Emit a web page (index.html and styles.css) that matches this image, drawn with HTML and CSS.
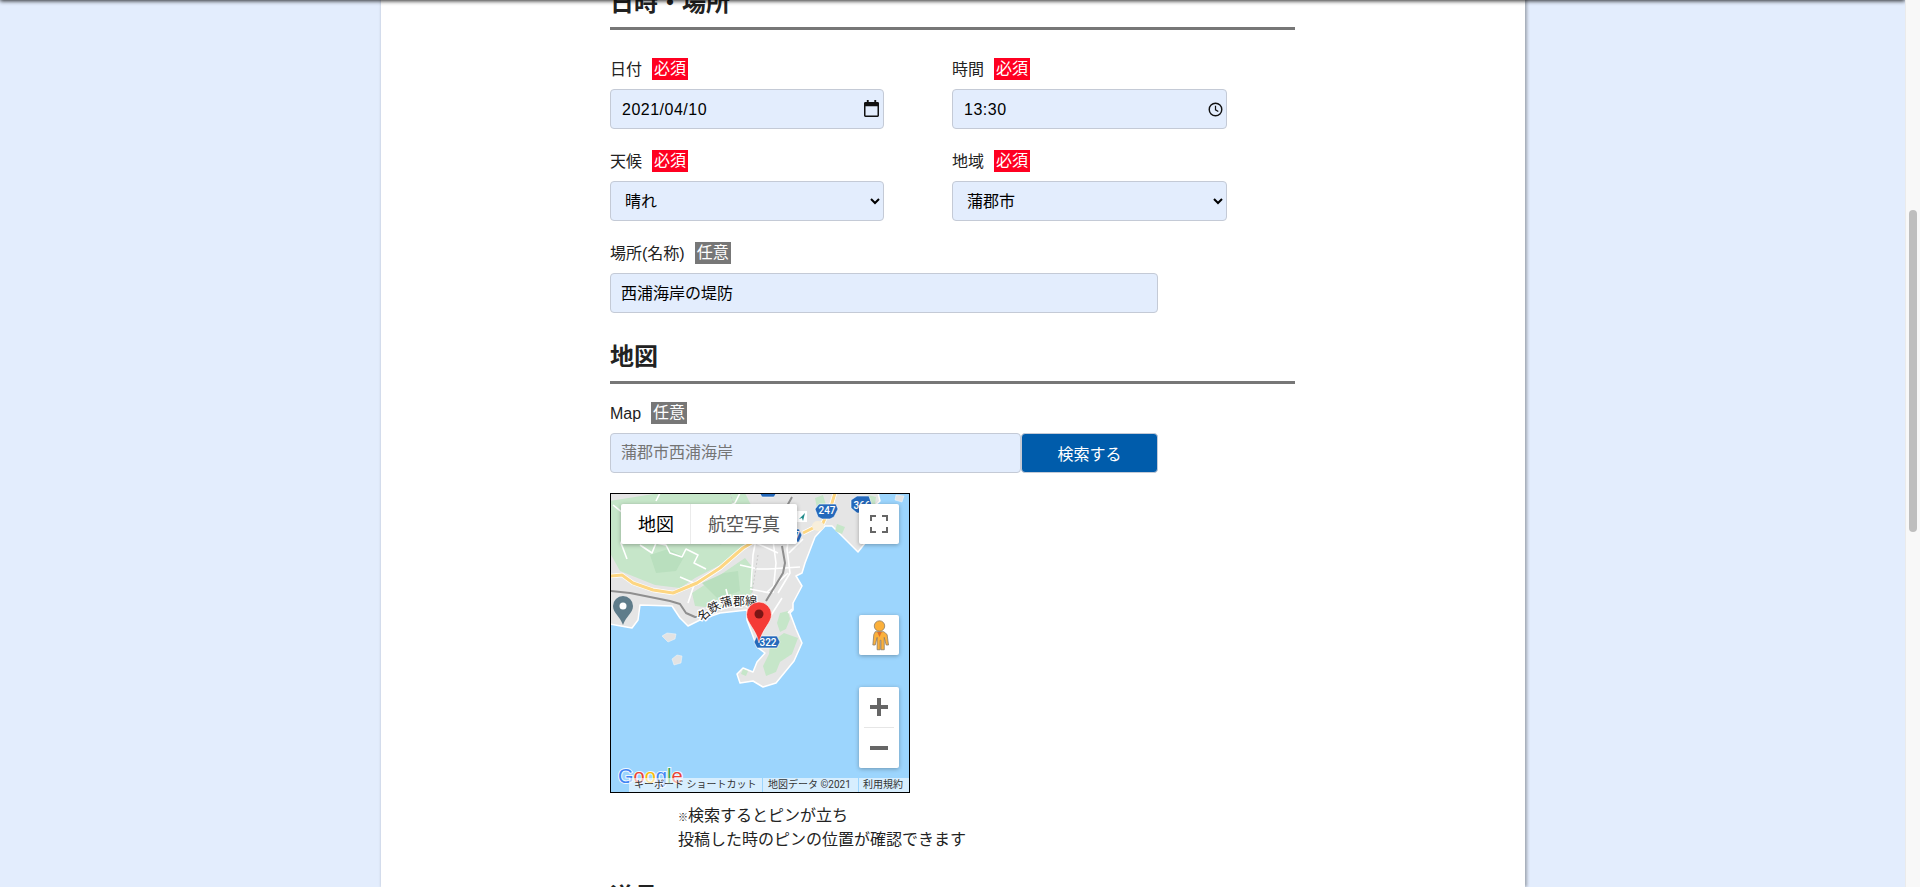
FILE: index.html
```html
<!DOCTYPE html>
<html lang="ja">
<head>
<meta charset="utf-8">
<title>投稿フォーム</title>
<link rel="stylesheet" href="styles.css">
</head>
<body>
<div class="viewport">
  <main class="stage">
    <div class="header-edge"></div>
    <form class="sheet">
      <h2 class="heading heading-first">日時・場所</h2>
      <div class="grid">
        <div class="field">
          <div class="label"><span class="label-text">日付</span><span class="badge req">必須</span></div>
          <div class="control">
            <input class="input" type="text" value="2021/04/10" readonly>
            <svg class="picker picker-date" viewBox="0 0 16 18"><path d="M3 0h2v2h6V0h2v2h1.500A1.500 1.500 0 0 1 16 3.500v13a1.500 1.500 0 0 1-1.500 1.500h-13A1.500 1.500 0 0 1 0 16.500v-13A1.500 1.500 0 0 1 1.500 2H3zM1.600 6.500v9.900h12.800V6.500z"/></svg>
          </div>
        </div>
        <div class="field">
          <div class="label"><span class="label-text">時間</span><span class="badge req">必須</span></div>
          <div class="control">
            <input class="input" type="text" value="13:30" readonly>
            <svg class="picker picker-time" viewBox="0 0 16 16"><circle cx="8" cy="8" r="6.700" fill="none" stroke="#111" stroke-width="1.500"/><path d="M8 4v4.400l3 1.800" fill="none" stroke="#111" stroke-width="1.300"/></svg>
          </div>
        </div>
        <div class="field">
          <div class="label"><span class="label-text">天候</span><span class="badge req">必須</span></div>
          <select class="input select"><option>晴れ</option><option>曇り</option><option>雨</option></select>
        </div>
        <div class="field">
          <div class="label"><span class="label-text">地域</span><span class="badge req">必須</span></div>
          <select class="input select"><option>蒲郡市</option><option>豊橋市</option></select>
        </div>
      </div>
      <div class="field field-wide">
        <div class="label"><span class="label-text">場所(名称)</span><span class="badge opt">任意</span></div>
        <input class="input wide" type="text" value="西浦海岸の堤防" readonly>
      </div>

      <h2 class="heading">地図</h2>
      <div class="field field-map">
        <div class="label"><span class="label-text">Map</span><span class="badge opt">任意</span></div>
        <div class="search">
          <input class="input search-input" type="text" placeholder="蒲郡市西浦海岸">
          <button class="search-btn" type="button">検索する</button>
        </div>
      </div>

      <div class="map">
        <svg class="map-art" viewBox="1 1 298 298">
          <rect class="water" x="0" y="0" width="300" height="300"/>
          <path class="land" d="M0 0H268L270 8 262 15 263 40 248 59 222 33 215 33 205 44 200 57 195 70 192 80 186 83 192 93 183 110 183 117 180 120 186 136 192 150 184 168 166 190 153 194 143 188 130 190 127 181 133 175 143 179 147 169 155 160 147 154 137 127 137 117 110 120 90 127 78 133 70 125 62 113 30 112 28 127 22 135 0 131Z"/>
          <path class="land-plain" d="M286 2l8 1-2 6-7-2zM52 143l5-3 9 1-1 5-7 3zM62 166l5-4 5 1-1 7-7 2z"/>
          <path class="green" d="M0 8L50 0H135L150 30 140 52 110 72 85 85 70 95 45 92 25 84 10 78 0 60Z"/>
          <path class="green" d="M85 113L82 100 110 82 135 65 143 75 142 100 130 110 105 115Z"/>
          <path class="green" d="M170 120l8-2 2 8-4 10-6 3-3-9zM160 150l14-10 14 5-6 16-12 8-4 10-10 4-3-10 6-12zM205 5l8-3 3 10-9 3zM258 2l8 2-1 7-8 0zM227 31l8 3-3 7-7-3zM133 176l5 2-2 5-5-2z"/>
          <path class="green-dark" d="M40 62l18-6 16 8-8 14-20 2zM92 90l22-10 14-2 2 20-22 8zM25 20l30-8 16 12-20 8zM100 30l22-6 6 18-18 10z"/>
          <path class="road" d="M3 12l10 8 4 14-6 16 6 16M30 52l12 8 4-10 10 2 4 8 12 4 4-8 12 6-4 8 12 6M50 0L46 8M130 0l-5 10-8 4M70 84l14 6M84 92l-6 18M130 72l18 4 10 0 32 -2M162 40l4 30-3 30M180 36l-3 20 3 24-12 20M193 46l-14 14M146 50l22 10M172 105l-14 22M148 36l-5 26-2 32M156 100l22 -20M182 116l-4 4M120 112l-4-16M140 96l20 4"/>
          <path class="road-thin" d="M120 0l6 18M148 62l-8 50"/>
          <path class="rail" d="M0 98L20 100 60 108 70 111 76 120 85 124 95 124M156 108L173 80 175 70 172 53M165 34L172 22 182 4"/>
          <path class="highway-edge" d="M0 83L12 82 23 90 43 97 63 100 87 90 110 75 133 55 150 45M193 40L213 30 222 10 225 0"/>
          <path class="highway" d="M0 83L12 82 23 90 43 97 63 100 87 90 110 75 133 55 150 45M193 40L213 30 222 10 225 0"/>
          <ellipse class="beige" cx="208" cy="33" rx="6" ry="5"/>
          <path class="shield" d="M152 -6h12l3 5-3 5h-12l-3-5zM209 11h17l2 5-4 8-4 2h-8l-4-2-3-8zM241 7l6-4h12l3 9-3 8h-12l-6-5zM180 36h9l3 6-3 7h-9zM147 143h20l3 6-3 6h-20l-3-6z"/>
          <text class="shield-text" x="217" y="21">247</text>
          <text class="shield-text" x="252" y="16">366</text>
          <text class="shield-text" x="187" y="46">7</text>
          <text class="shield-text" x="158" y="153">322</text>
          <rect class="poi-bg" x="186" y="18" width="11" height="11"/>
          <path class="poi" d="M195 20l-2 8-1-3-3 1z"/>
          <path id="railLabel" class="none" d="M92 129Q103 117 118 113L150 112"/>
          <text class="rail-label"><textPath href="#railLabel">名鉄蒲郡線</textPath></text>
          <path class="pin-gray" d="M13 132C10 123 3 120 3 113A10 10 0 1 1 23 113C23 120 16 123 13 132Z"/>
          <circle class="pin-hole" cx="13" cy="113" r="3.500"/>
          <path class="pin-red" d="M149 150C146 136 136.500 130 136.500 121.500A12.500 12.500 0 1 1 161.500 121.500C161.500 130 152 136 149 150Z"/>
          <circle class="pin-dot" cx="149" cy="121" r="4.500"/>
          <text class="logo" x="8" y="290"><tspan class="g-blue">G</tspan><tspan class="g-red">o</tspan><tspan class="g-yellow">o</tspan><tspan class="g-blue">g</tspan><tspan class="g-green">l</tspan><tspan class="g-red">e</tspan></text>
        </svg>

        <div class="map-type">
          <span class="map-type-item active">地図</span>
          <span class="map-type-item">航空写真</span>
        </div>
        <div class="map-btn fullscreen">
          <svg viewBox="0 0 18 18" class="fs-icon"><path d="M1 6V1h5M12 1h5v5M17 12v5h-5M6 17H1v-5"/></svg>
        </div>
        <div class="map-btn pegman">
          <svg viewBox="0 0 20 32" class="peg-icon">
            <circle class="peg" cx="10" cy="6" r="5.500"/>
            <path class="peg" d="M5.500 12h9l3.500 3 1.500 11-2.500 0-2-8v13h-3.500v-10h-.8v10H7.500V18l-2 8-2.500 0L4 15z"/>
            <path class="peg-v" d="M7.500 12.200h5l-2.500 5.300z"/>
          </svg>
        </div>
        <div class="zoom">
          <button class="zoom-btn" type="button"><svg viewBox="0 0 18 18" class="zoom-icon"><path d="M7 0h4v7h7v4h-7v7H7v-7H0V7h7z"/></svg></button>
          <div class="zoom-sep"></div>
          <button class="zoom-btn" type="button"><svg viewBox="0 0 18 18" class="zoom-icon"><path d="M0 7h18v4H0z"/></svg></button>
        </div>
        <div class="attrib">
          <span class="attrib-item attrib-keys">キーボード ショートカット</span>
          <span class="attrib-item attrib-data">地図データ ©2021</span>
          <span class="attrib-item attrib-terms">利用規約</span>
        </div>
      </div>

      <p class="note"><span class="kome">※</span>検索するとピンが立ち<br>投稿した時のピンの位置が確認できます</p>

      <h2 class="heading heading-last">道具</h2>
    </form>
  </main>
  <div class="scrollbar"><div class="thumb"></div></div>
</div>
</body>
</html>
```

FILE: styles.css
```css
* { box-sizing: border-box; }
html, body { margin: 0; height: 100%; overflow: hidden; }
body {
  font-family: "Liberation Sans", "Noto Sans CJK JP", sans-serif;
  font-size: 16px;
  color: #222;
  background: #e3edfd;
}
.viewport { display: flex; height: 887px; overflow: hidden; }
.stage {
  position: relative;
  flex: 1;
  display: flex;
  background: #e3edfd;
  overflow: hidden;
}
.header-edge {
  position: absolute;
  top: -6px;
  left: 0;
  right: 0;
  height: 6px;
  box-shadow: 0 1px 4px rgba(0, 0, 0, .85);
  z-index: 5;
}
.sheet {
  width: 1144px;
  height: 904px;
  margin-left: 381px;
  margin-top: -17px;
  padding-left: 229px;
  background: #fff;
  box-shadow: 2px 0 3px rgba(0, 0, 0, .3), -1px 0 2px rgba(0, 0, 0, .08);
  flex: none;
}
.heading {
  width: 685px;
  height: 47px;
  margin: 24px 0 0;
  padding: 0;
  border-bottom: 3px solid #777;
  font-size: 24px;
  line-height: 36px;
  font-weight: 700;
  color: #222;
  font-family: "Noto Sans CJK JP", sans-serif;
}
.heading-first { margin-top: 0; }
.heading-last { margin-top: 27px; }
.grid {
  display: grid;
  grid-template-columns: 274px 275px;
  column-gap: 68px;
  row-gap: 21px;
  margin-top: 28px;
}
.field { display: flex; flex-direction: column; gap: 9px; }
.field-wide { margin-top: 21px; }
.field-map { margin-top: 18px; }
.label {
  display: flex;
  align-items: center;
  gap: 10px;
  height: 22px;
  line-height: 22px;
  color: #222;
}
.label-text { position: relative; top: 1px; }
.badge {
  width: 36px;
  height: 22px;
  text-align: center;
  color: #fff;
  line-height: 22px;
}
.req { background: #ff0021; }
.opt { background: #777; }
.control { position: relative; }
.input {
  display: block;
  width: 100%;
  height: 40px;
  padding: 0 10px;
  background: #e3edfd;
  border: 1px solid #c4cad6;
  border-radius: 4px;
  font: 16px "Liberation Sans", "Noto Sans CJK JP", sans-serif;
  color: #000;
  outline: none;
}
.input::placeholder { color: #757575; opacity: 1; }
.control .input { letter-spacing: .5px; padding: 1px 11px 0; }
.select { padding-left: 10px; }
.wide { width: 548px; padding-bottom: 2px; }
.picker { position: absolute; fill: #111; }
.picker-date { right: 5px; top: 11px; width: 15px; height: 17px; }
.picker-time { right: 4px; top: 13px; width: 15px; height: 15px; }
.search { display: flex; width: 548px; }
.search-input { flex: 1; width: auto; }
.search-btn {
  width: 137px;
  height: 40px;
  background: #005cab;
  border: 1px solid #c4cad6;
  border-radius: 4px;
  color: #fff;
  font: 16px "Liberation Sans", "Noto Sans CJK JP", sans-serif;
  padding: 0;
}
.map {
  position: relative;
  width: 300px;
  height: 300px;
  margin-top: 20px;
  border: 1px solid #000;
  overflow: hidden;
  font-family: "Roboto", "Noto Sans CJK JP", sans-serif;
}
.map-art { display: block; width: 298px; height: 298px; }
.water { fill: #9cd5fd; }
.land { fill: #e5e5e5; stroke: #fff; stroke-width: 1.500; stroke-linejoin: round; }
.land-plain { fill: #e3e3e3; stroke: #f2f6f9; stroke-width: .5; }
.green { fill: #c6e6c9; }
.green-dark { fill: #b9dfbe; }
.road { fill: none; stroke: #fff; stroke-width: 1.600; stroke-linejoin: round; }
.road-thin { fill: none; stroke: #c9c9c9; stroke-width: 1; stroke-dasharray: 2 2; }
.rail { fill: none; stroke: #8f8f8f; stroke-width: 2; stroke-linejoin: round; }
.highway-edge { fill: none; stroke: #fff; stroke-width: 4.500; stroke-linejoin: round; }
.highway { fill: none; stroke: #fdd682; stroke-width: 3; stroke-linejoin: round; }
.beige { fill: #f7eedb; }
.shield { fill: #2569bb; stroke: #fff; stroke-width: .6; }
.shield-text {
  fill: #fff;
  font: 500 10px "Roboto", sans-serif;
  text-anchor: middle;
}
.poi-bg { fill: #fff; }
.poi { fill: #1f8a8a; }
.none { fill: none; }
.rail-label {
  font: 12px "Noto Sans CJK JP", sans-serif;
  fill: #222;
  stroke: #fff;
  stroke-width: 2.500;
  paint-order: stroke;
}
.pin-gray { fill: #5f7c8a; }
.pin-hole { fill: #fff; }
.pin-red { fill: #f53b36; stroke: #fff; stroke-width: .6; }
.pin-dot { fill: #7b1515; }
.logo {
  font: 400 20px "Liberation Sans", sans-serif;
  stroke: #fff;
  stroke-width: 2;
  paint-order: stroke;
  stroke-opacity: .85;
}
.g-blue { fill: #4285f4; }
.g-red { fill: #ea4335; }
.g-yellow { fill: #fbbc05; }
.g-green { fill: #34a853; }
.map-type {
  position: absolute;
  top: 10px;
  left: 10px;
  display: flex;
  height: 40px;
  background: #fff;
  border-radius: 2px;
  box-shadow: 0 1px 4px rgba(0, 0, 0, .3);
  font-size: 18px;
  line-height: 41px;
  color: #565656;
}
.map-type-item { padding: 0 16px; white-space: nowrap; }
.map-type-item + .map-type-item { border-left: 1px solid #ebebeb; padding: 0 17px 0 17px; width: 107px; }
.active { color: #000; padding: 0 17px 0 17px; width: 69px; }
.map-btn {
  position: absolute;
  left: 248px;
  width: 40px;
  height: 40px;
  background: #fff;
  border-radius: 2px;
  box-shadow: 0 1px 4px rgba(0, 0, 0, .3);
  display: flex;
  align-items: center;
  justify-content: center;
}
.fullscreen { top: 10px; }
.pegman { top: 121px; }
.fs-icon { width: 18px; height: 18px; fill: none; stroke: #666; stroke-width: 2; }
.peg-icon { width: 19px; height: 31px; }
.peg { fill: #fbb03b; stroke: #86796a; stroke-width: .8; }
.peg-v { fill: #e0702a; }
.zoom {
  position: absolute;
  left: 248px;
  top: 193px;
  width: 40px;
  height: 81px;
  background: #fff;
  border-radius: 2px;
  box-shadow: 0 1px 4px rgba(0, 0, 0, .3);
  display: flex;
  flex-direction: column;
  align-items: center;
}
.zoom-btn {
  width: 40px;
  height: 40px;
  padding: 0;
  border: 0;
  background: none;
  display: flex;
  align-items: center;
  justify-content: center;
}
.zoom-sep { width: 30px; height: 1px; background: #e6e6e6; flex: none; }
.zoom-icon { width: 18px; height: 18px; fill: #666; }
.attrib {
  position: absolute;
  right: 0;
  bottom: 0;
  width: 280px;
  height: 14px;
  display: flex;
  font-size: 10px;
  line-height: 14px;
  color: #333;
  white-space: nowrap;
}
.attrib-item {
  background: rgba(255, 255, 255, .6);
  padding: 0 0 0 5px;
  text-align: left;
  flex: none;
}
.attrib-keys { width: 133px; padding-left: 5px; }
.attrib-data { width: 95px; margin-left: 1px; }
.attrib-terms { flex: 1; margin-left: 1px; padding-left: 4px; }
.note {
  margin: 9px 0 0 68px;
  line-height: 24px;
  height: 48px;
  color: #222;
  font-family: "Noto Sans CJK JP", sans-serif;
}
.kome { font-size: 10px; font-weight: 700; line-height: 1; }
.scrollbar {
  flex: none;
  width: 15px;
  background: #f8f8f8;
  border-left: 1px solid #ebebeb;
  padding: 210px 3px 0 3px;
}
.thumb { width: 8px; height: 322px; background: #bebebe; border-radius: 4px; }
```
